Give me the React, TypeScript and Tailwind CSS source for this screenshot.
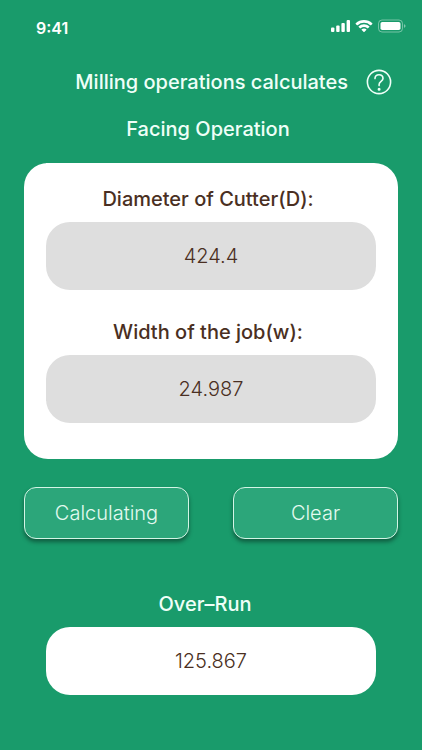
import React, { useState } from "react";

const StatusBar = () => {
  return (
    <div className="flex h-14 items-center justify-between pr-4 pl-9 text-white">
      <span className="text-base font-semibold">9:41</span>
      <svg width="76" height="16" viewBox="0 0 76 16" fill="currentColor" className="mb-1">
        {/* Signal */}
        <rect x="1" y="9.5" width="3.4" height="4.5" rx="1" />
        <rect x="6.2" y="7.5" width="3.4" height="6.5" rx="1" />
        <rect x="11.4" y="5" width="3.4" height="9" rx="1" />
        <rect x="16.6" y="2" width="3.4" height="12" rx="1" />
        {/* Wifi */}
        <path d="M34 2c3.200 0 6.100 1.200 8.300 3.200.2.200.2.500 0 .7l-1.300 1.300c-.2.200-.5.200-.7 0A9.200 9.200 0 0 0 34 4.800a9.200 9.200 0 0 0-6.300 2.400c-.2.200-.5.200-.7 0l-1.300-1.300c-.2-.2-.2-.5 0-.7A12.200 12.200 0 0 1 34 2Z" />
        <path d="M34 6.300c2 0 3.900.8 5.300 2 .2.200.2.500 0 .7L38 10.300c-.2.200-.5.200-.7 0A5 5 0 0 0 34 9.100a5 5 0 0 0-3.300 1.200c-.2.200-.5.200-.7 0L28.700 9c-.2-.2-.2-.5 0-.7a8 8 0 0 1 5.300-2Z" />
        <path d="M34 10.500c.9 0 1.700.3 2.300.8.200.2.200.5 0 .7l-2 2c-.2.200-.4.200-.6 0l-2-2c-.2-.2-.2-.5 0-.7.600-.5 1.400-.8 2.300-.8Z" />
        {/* Battery */}
        <rect x="48.5" y="2" width="24" height="12" rx="3.500" fill="none" stroke="currentColor" strokeOpacity="0.4" />
        <rect x="50.500" y="4" width="20" height="8" rx="1.800" />
        <path d="M74 6.200v3.600c1-.3 1.500-1 1.500-1.800S75 6.500 74 6.200Z" opacity="0.45" />
      </svg>
    </div>
  );
};

const HelpIcon = () => {
  return (
    <svg
      width="26"
      height="26"
      viewBox="0 0 26 26"
      fill="none"
      stroke="currentColor"
      strokeWidth="1.6"
      strokeLinecap="round"
      strokeLinejoin="round"
    >
      <circle cx="13" cy="13" r="11.600" />
      <path d="M9 9.600C9 7.200 10.800 5.700 13 5.700s4 1.500 4 3.700c0 2.700-3.900 3.200-3.900 6v1.200" />
      <circle cx="13.100" cy="20.200" r="0.700" fill="currentColor" />
    </svg>
  );
};

type FieldProps = {
  id: string;
  label: string;
  value: string;
  onChange: (value: string) => void;
};

const Field = ({ id, label, value, onChange }: FieldProps) => {
  return (
    <div className="flex flex-col gap-[9px]">
      <label htmlFor={id} className="pr-1.5 text-center text-xl leading-7 font-medium">
        {label}
      </label>
      <input
        id={id}
        type="text"
        inputMode="decimal"
        value={value}
        onChange={(e) => onChange(e.target.value)}
        className="h-17 w-full rounded-3xl bg-[#dedede] text-center text-xl font-light outline-none"
      />
    </div>
  );
};

const buttonStyle =
  "h-13 flex-1 rounded-xl border border-[#d3f5e6] bg-[#2ca67a] text-xl font-light text-[#e3faf0] shadow-[0_3px_4px_rgba(0,0,0,0.4)]";

const App = () => {
  const [diameter, setDiameter] = useState("424.4");
  const [width, setWidth] = useState("24.987");
  const [overRun, setOverRun] = useState("125.867");

  const calculate = () => {
    const d = Number(diameter);
    const w = Number(width);
    const result = (d - Math.sqrt(d * d - w * w)) / 2;
    setOverRun(Number.isFinite(result) ? result.toFixed(3) : "");
  };

  const clear = () => {
    setDiameter("");
    setWidth("");
    setOverRun("");
  };

  return (
    <div className="min-h-screen bg-[#199b6b] pb-14 font-['Inter',sans-serif] text-[#4a2f22]">
      <StatusBar />

      {/* Title */}
      <header className="mt-3 flex items-center justify-end gap-[18px] pr-[30px] text-[#effff8]">
        <h1 className="text-xl leading-7 font-medium">Milling operations calculates</h1>
        <button type="button" aria-label="Help">
          <HelpIcon />
        </button>
      </header>

      <main className="px-6">
        <h2 className="mt-[19px] pr-1.5 text-center text-xl leading-7 font-medium text-[#effff8]">
          Facing Operation
        </h2>

        {/* Inputs */}
        <section className="mt-5 flex flex-col gap-7 rounded-3xl bg-white px-[22px] pt-[22px] pb-9">
          <Field id="diameter" label="Diameter of Cutter(D):" value={diameter} onChange={setDiameter} />
          <Field id="width" label="Width of the job(w):" value={width} onChange={setWidth} />
        </section>

        {/* Actions */}
        <div className="mt-7 flex gap-11">
          <button type="button" onClick={calculate} className={buttonStyle}>
            Calculating
          </button>
          <button type="button" onClick={clear} className={buttonStyle}>
            Clear
          </button>
        </div>

        {/* Result */}
        <section className="mt-[51px] flex flex-col gap-[9px] px-[22px]">
          <label htmlFor="over-run" className="pr-3 text-center text-xl leading-7 font-medium text-[#effff8]">
            Over–Run
          </label>
          <input
            id="over-run"
            type="text"
            readOnly
            value={overRun}
            className="h-17 w-full rounded-3xl bg-white text-center text-xl font-light outline-none"
          />
        </section>
      </main>
    </div>
  );
};

export default App;
